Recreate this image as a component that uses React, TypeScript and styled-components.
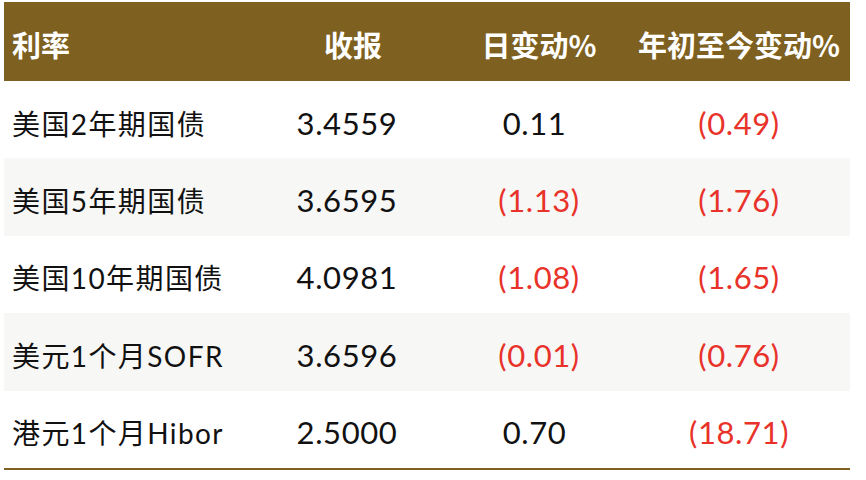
import styled, { createGlobalStyle } from "styled-components";

/* ------------------------------------------------------------------ */
/*  Data                                                               */
/* ------------------------------------------------------------------ */

type RateRow = {
  name: string;
  close: string;
  dayChange: number;
  ytdChange: number;
};

const ROWS: RateRow[] = [
  { name: "美国2年期国债", close: "3.4559", dayChange: 0.11, ytdChange: -0.49 },
  { name: "美国5年期国债", close: "3.6595", dayChange: -1.13, ytdChange: -1.76 },
  { name: "美国10年期国债", close: "4.0981", dayChange: -1.08, ytdChange: -1.65 },
  { name: "美元1个月SOFR", close: "3.6596", dayChange: -0.01, ytdChange: -0.76 },
  { name: "港元1个月Hibor", close: "2.5000", dayChange: 0.7, ytdChange: -18.71 },
];

const GOLD = "#7e6020";
const RED = "#e8322a";
const COLUMNS = "252px 194px 178px 222px";

/* ------------------------------------------------------------------ */
/*  Styles                                                             */
/* ------------------------------------------------------------------ */

const GlobalStyle = createGlobalStyle`
  html, body {
    margin: 0;
    padding: 0;
    background: #ffffff;
  }
  body {
    font-family: "Lato", "Noto Sans CJK SC", sans-serif;
  }
`;

const Page = styled.div`
  padding: 2px 16px 0 4px;
`;

const Table = styled.div`
  display: flex;
  flex-direction: column;
  width: 846px;
  border-bottom: 2px solid ${GOLD};
`;

const HeaderRow = styled.div`
  display: grid;
  grid-template-columns: ${COLUMNS};
  height: 79px;
  background: ${GOLD};
  color: #ffffff;
  font-family: "Noto Sans CJK SC", sans-serif;
  font-weight: 700;
  font-size: 29px;
`;

const HeadCell = styled.div<{ $align?: "left" | "center" }>`
  display: flex;
  align-items: center;
  justify-content: ${(p) => (p.$align === "left" ? "flex-start" : "center")};
  padding: 5px 0 0 ${(p) => (p.$align === "left" ? "8px" : "0")};
`;

const BodyRow = styled.div<{ $striped: boolean }>`
  display: grid;
  grid-template-columns: ${COLUMNS};
  height: 77.4px;
  background: ${(p) => (p.$striped ? "#f7f7f5" : "#ffffff")};
  color: #111111;
`;

const NameCell = styled.div`
  display: flex;
  align-items: center;
  padding: 6px 0 0 8px;
  font-family: "Lato", "Noto Sans CJK SC", sans-serif;
  font-size: 28px;
  letter-spacing: 1.4px;
  white-space: nowrap;
`;

const ValueCell = styled.div<{ $negative?: boolean; $shift?: number }>`
  display: flex;
  align-items: center;
  justify-content: center;
  padding: 6px ${(p) => p.$shift ?? 0}px 0 0;
  color: ${(p) => (p.$negative ? RED : "#111111")};
  font-size: 31px;
  letter-spacing: 0.6px;
  white-space: nowrap;
`;

const Pad = styled.span`
  visibility: hidden;
`;

/* ------------------------------------------------------------------ */
/*  Helpers                                                            */
/* ------------------------------------------------------------------ */

function Change({ value }: { value: number }) {
  const text = Math.abs(value).toFixed(2);
  if (value < 0) {
    return <ValueCell $negative>({text})</ValueCell>;
  }
  return (
    <ValueCell>
      <Pad>(</Pad>
      {text}
      <Pad>)</Pad>
      <Pad>)</Pad>
    </ValueCell>
  );
}

/* ------------------------------------------------------------------ */
/*  App                                                                */
/* ------------------------------------------------------------------ */

export default function App() {
  return (
    <Page>
      <GlobalStyle />
      <Table>
        <HeaderRow>
          <HeadCell $align="left">利率</HeadCell>
          <HeadCell>收报</HeadCell>
          <HeadCell>日变动%</HeadCell>
          <HeadCell>年初至今变动%</HeadCell>
        </HeaderRow>
        {ROWS.map((row, i) => (
          <BodyRow key={row.name} $striped={i % 2 === 1}>
            <NameCell>{row.name}</NameCell>
            <ValueCell $shift={12}>{row.close}</ValueCell>
            <Change value={row.dayChange} />
            <Change value={row.ytdChange} />
          </BodyRow>
        ))}
      </Table>
    </Page>
  );
}
